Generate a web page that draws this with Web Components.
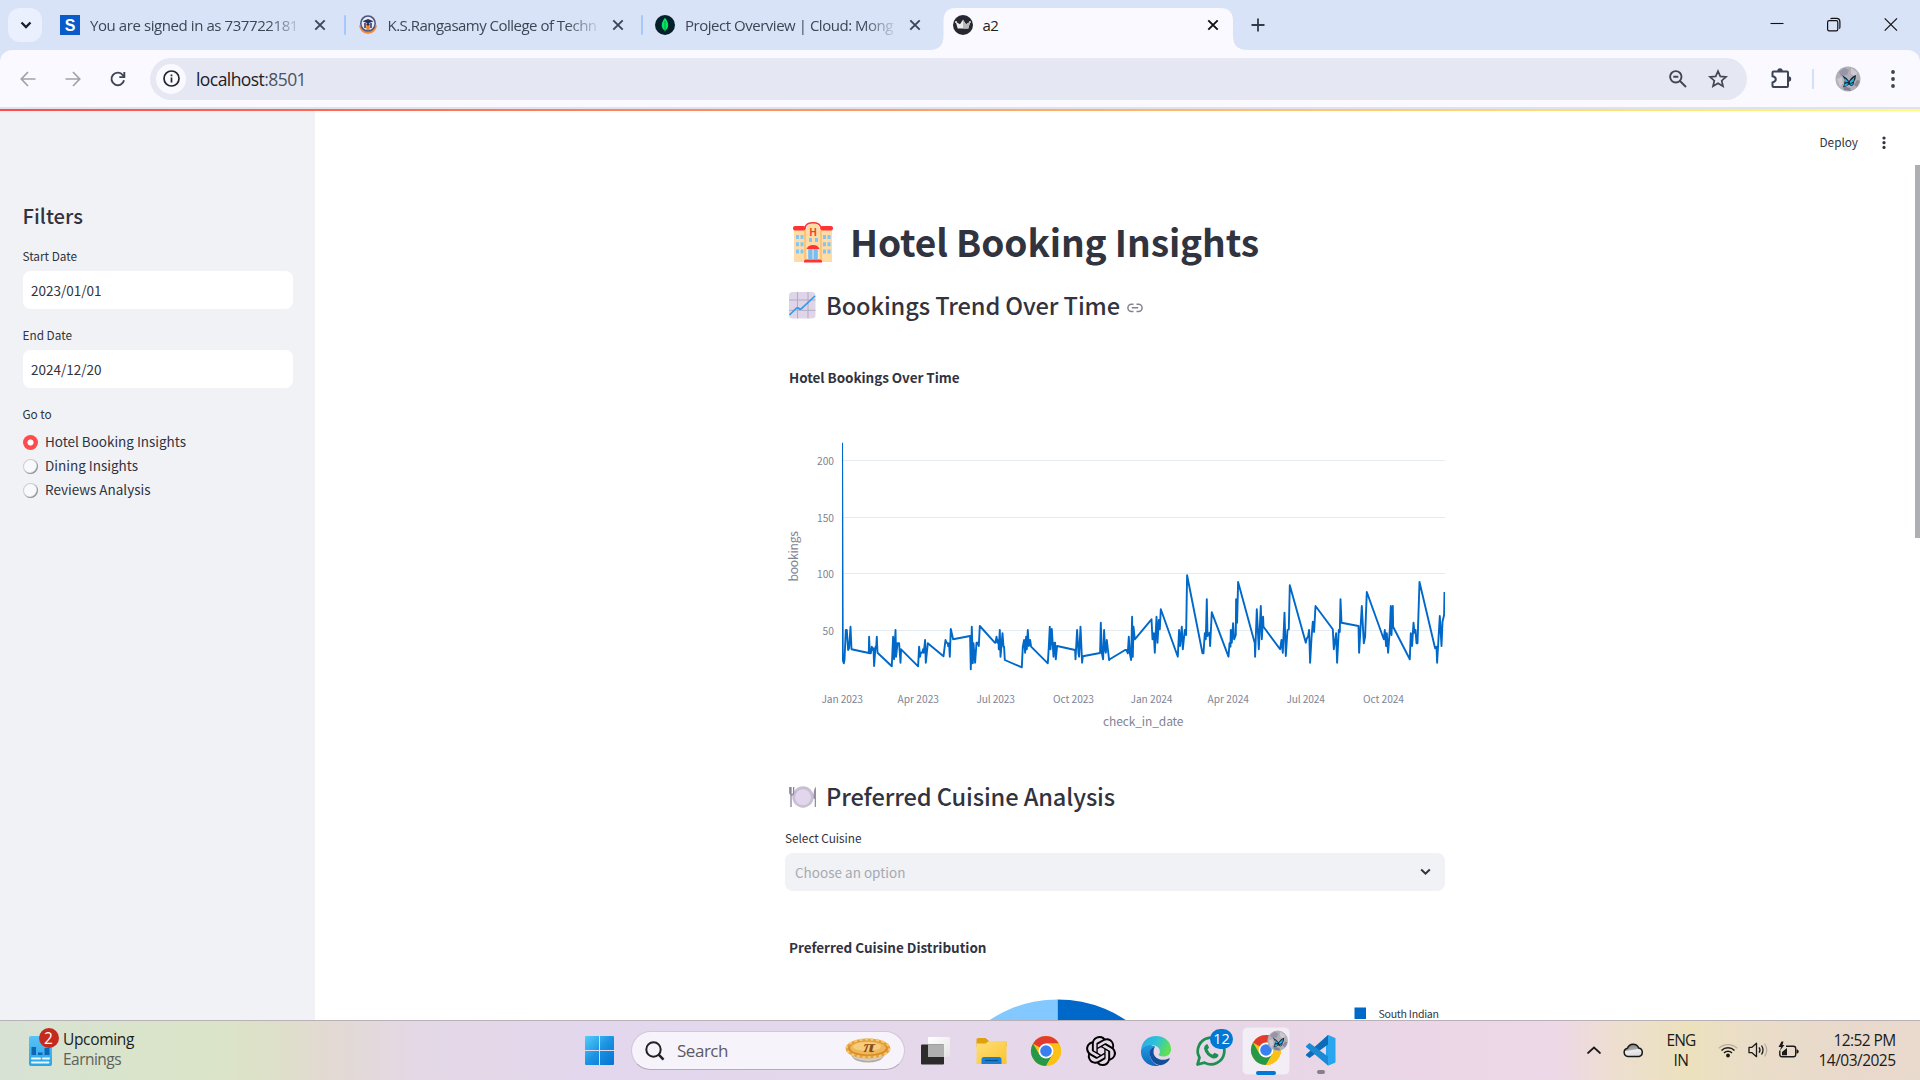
<!DOCTYPE html>
<html lang="en">
<head>
<meta charset="utf-8">
<title>a2</title>
<style>
html,body{margin:0;padding:0;width:1920px;height:1080px;overflow:hidden;background:#fff}
body{font-family:"Open Sans","Noto Sans",sans-serif}
</style>
</head>
<body>
<desktop-screen></desktop-screen>
<script>
const define=(name,css,render,after)=>customElements.define(name,class extends HTMLElement{
  connectedCallback(){
    if(this.shadowRoot)return;
    const root=this.attachShadow({mode:'open'});
    root.innerHTML=`<style>*{box-sizing:border-box}${css}</style>`+(typeof render==='function'?render(this):render);
    if(after)after(this);
  }
});
const at=(e,n,d='')=>e.getAttribute(n)??d;

const butterfly=(cx,cy,r)=>`<g><circle cx="${cx}" cy="${cy}" r="${r}" fill="#b3afb9"/>
<g transform="translate(${cx} ${cy}) scale(${r/12.5})"><path d="M-9-7 L-4-11 1-9-1-4-7-3Z" fill="#9796a6"/><path d="M3-11 9-7 8-2 3-5Z" fill="#cdc9cf"/><path d="M-11 0-6-2-5 4-8 8Z" fill="#cbc7ce"/><path d="M-5 7 2 9 3 12-4 11Z" fill="#83828f"/><path d="M9 1 12 2 9 8 6 6Z" fill="#8d8a96"/>
<path d="M-6-4 Q-2-2 1 2 Q4-3 8-4 Q8 0 6 3 Q6 7 3 7 L1 5.500 Q-2 8-5 8 Q-4 6-4 5 L-3 1 Z" fill="#182836"/><path d="M-3.500-1 .3 2.500-2.500 3.500Z M1.800 2.500 6.500-2 5.500 2.500 2 4.500Z M-3.500 5 .3 4-1 6.500-3.500 7.500Z M2 5.200 5.300 4 4 6.500Z" fill="#22b4ea"/></g></g>`;
const chrome=`<circle cx="15" cy="15" r="15" fill="#fbc116"/><path d="M15 15 2 7.5A15 15 0 0 1 28 7.5H15Z" fill="#e33b2e"/><path d="M2 7.5A15 15 0 0 0 15 30L21.5 18.7 8.5 18.7Z" fill="#279847"/><path d="M28 7.5H15V15L21.5 18.7 15 30A15 15 0 0 0 28 7.5Z" fill="#fbc116"/><circle cx="15" cy="15" r="7.4" fill="#fff"/><circle cx="15" cy="15" r="5.8" fill="#3a7ff0"/>`;
const S='fill="none" stroke="currentColor"';
const icons={
 down:[12,8,`<path d="M1.5 1.5 6 6 10.5 1.5" ${S} stroke-width="2.3"/>`],
 x:[12,12,`<path d="M1.300 1.300 10.700 10.700M10.700 1.300 1.300 10.700" ${S} stroke-width="1.900"/>`],
 plus:[14,14,`<path d="M7 0.5V13.5M.5 7H13.5" ${S} stroke-width="1.800"/>`],
 s:[20,20,`<rect width="20" height="20" fill="#0a5bc9"/><text x="10" y="16" text-anchor="middle" font-family="Liberation Sans,sans-serif" font-weight="700" font-size="16" fill="#fff">S</text>`],
 college:[20,20,`<path d="M1 9.500A9 9.500 0 0 0 19 9.500L15 14.500 10 16.500 5 14.500Z" fill="#f38b3c"/><ellipse cx="10" cy="8.500" rx="7.200" ry="7.600" fill="#e9e9f0" stroke="#4a5280" stroke-width="1.500"/><path d="M4.500 6.300 10 4 15.500 6.300 10 8.600Z" fill="#27305f"/><path d="M6 8H8V13H6Z M12 8H14V13H12Z" fill="#59618b"/><path d="M8.300 8.500H11.700V15H8.300Z" fill="#f07f28"/><circle cx="10" cy="9.300" r="1.400" fill="#27305f"/>`],
 mongo:[20,20,`<circle cx="10" cy="10" r="10" fill="#04202b"/><path d="M10 2.700C14.500 8 14 13 10.300 15.500L10 17.500 9.700 15.500C6 13 5.500 8 10 2.700Z" fill="#05e665"/><path d="M10 6V16" stroke="#04803d" stroke-width=".7"/>`],
 crown:[20,20,`<circle cx="10" cy="10" r="10" fill="#262730"/><path d="M2.700 6.800 7 9.300 10 4.700 13 9.300 17.300 6.800 15.300 13.500H4.700Z" fill="#ededed"/><path d="M10 4.700 13 9.300 17.300 6.800 15.300 13.500H10 Z" fill="#b8b8b8"/><circle cx="3" cy="7" r="1" fill="#eee"/><circle cx="17" cy="7" r="1" fill="#ccc"/>`],
 min:[14,14,`<path d="M.5 5.500H13.500" ${S} stroke-width="1.100"/>`],
 max:[14,14,`<rect x=".6" y="2.700" width="10.200" height="10.200" rx="1.600" ${S} stroke-width="1.200"/><path d="M3.500.9Q4 .4 5 .4H9.500Q12.900.4 12.900 4V9Q12.900 10 12.400 10.600" ${S} stroke-width="1.200"/>`],
 wx:[14,14,`<path d="M.7.4 13 12.700M13 .4.7 12.700" ${S} stroke-width="1.200"/>`],
 back:[16,16,`<path d="M8 1 1.300 8 8 15M1.500 8H15.500" ${S} stroke-width="1.700"/>`],
 fwd:[16,16,`<path d="M8 1 14.700 8 8 15M14.500 8H.5" ${S} stroke-width="1.700"/>`],
 reload:[16,16,`<path d="M14 9.200A6.300 6.300 0 1 1 12.900 4.200L14.300 5.800" ${S} stroke-width="1.900"/><path d="M9.300 6.100H14.300V1" ${S} stroke-width="1.900"/>`],
 info:[17,17,`<circle cx="8.500" cy="8.500" r="7.500" ${S} stroke-width="1.700"/><path d="M8.500 7.500V12.500M8.500 4.500V6.200" ${S} stroke-width="1.700"/>`],
 zoom:[18,18,`<circle cx="6.800" cy="6.800" r="5.700" ${S} stroke-width="1.900"/><path d="M11 11 17 17M4.300 6.800H9.300" ${S} stroke-width="1.900"/>`],
 star:[20,20,`<path d="M10 2.200 12.300 7.400 18 7.900 13.700 11.700 15 17.300 10 14.300 5 17.300 6.300 11.700 2 7.900 7.700 7.400Z" ${S} stroke-width="1.700"/>`],
 puzzle:[22,22,`<path d="M3.500 4.500H17Q18 4.500 18 5.500V19Q18 20 17 20H3.500Q2.500 20 2.500 19V15.500Q5.800 14.500 5.800 12.200Q5.800 10 2.500 9.200V5.500Q2.500 4.500 3.500 4.500Z" ${S} stroke-width="2"/><path d="M7.300 4A2.700 2.700 0 0 1 12.700 4Z M18.500 9.300A2.700 2.700 0 0 1 18.500 14.700Z" fill="currentColor"/>`],
 avatar:[26,26,butterfly(13,13,12.5)],
 dots:[4,18,`<circle cx="2" cy="2" r="1.900" fill="currentColor"/><circle cx="2" cy="9" r="1.900" fill="currentColor"/><circle cx="2" cy="16" r="1.900" fill="currentColor"/>`],
 dots2:[4,14,`<circle cx="2" cy="2" r="1.600" fill="currentColor"/><circle cx="2" cy="6.700" r="1.600" fill="currentColor"/><circle cx="2" cy="11.400" r="1.600" fill="currentColor"/>`],
 hotel:[42,42,`<path d="M2 8H40V41H2Z" fill="#ffdca5"/><path d="M13 41V13A8 11 0 0 1 29 13V41Z" fill="#ffdca5"/><path d="M13 9V40M29 9V40" stroke="#f6b568" stroke-width="1.200"/><rect x="1" y="5" width="12.500" height="4.500" rx="2" fill="#ff3434"/><rect x="28.500" y="5" width="12.500" height="4.500" rx="2" fill="#ff3434"/><path d="M13 8V6.500A8.200 6 0 0 1 29 6.500V8" fill="none" stroke="#ff3434" stroke-width="1.600"/><text x="21" y="14.500" text-anchor="middle" font-family="Liberation Sans,sans-serif" font-size="10" font-weight="700" fill="#f2412e">H</text>
 <path fill="#81c6f7" d="M4 14h3v4h-3zM8.500 14h3v4h-3zM4 21.300h3v4h-3zM8.500 21.300h3v4h-3zM4 28.600h3v4h-3zM8.500 28.600h3v4h-3zM31 14h3v4h-3zM35.500 14h3v4h-3zM31 21.300h3v4h-3zM35.500 21.300h3v4h-3zM31 28.600h3v4h-3zM35.500 28.600h3v4h-3zM17 17h3v4h-3zM23 17h3v4h-3z"/><path d="M16 28H26V38H16Z" fill="#76bdf3"/><path d="M15.700 28V38M26.300 28V38M21 28V38" stroke="#ffe8c2" stroke-width="1"/><path d="M14.500 28Q16 24 21 24T27.500 28Z" fill="#ff3434"/><path d="M12 41.500V40Q12.500 38.500 14 38.500H28Q29.500 38.500 30 40V41.500Z" fill="#f33"/>`],
 trend:[27,27,`<rect width="26.500" height="26.500" rx="3.500" fill="#dfd5e9"/><path d="M8.500 0V26.500M19 0V26.500M0 8H26.500M0 18.300H26.500" stroke="#b7a9c6" stroke-width="1"/><path d="M.5 23 7 16.500Q8.500 15.200 10 16.500T13 16.200L26 4" fill="none" stroke="#2f9cec" stroke-width="1.700"/>`],
 link:[16,10,`<path d="M6.500 1.200H4.500A3.600 3.600 0 0 0 4.500 8.400H6.500M9.500 1.200H11.500A3.600 3.600 0 0 1 11.500 8.400H9.500M4.800 4.800H11.200" ${S} stroke-width="1.500"/>`],
 plate:[28,24,`<circle cx="14" cy="12" r="10.700" fill="#c9bfd5"/><circle cx="14" cy="12.300" r="8" fill="#e1d6ec"/><path d="M2 2V22M.8 2V8Q2 10.500 3.200 9.500M4.600 2V8Q4 10.500 2 10" fill="none" stroke="#8d849c" stroke-width="1.300"/><path d="M27 1.500V22H25.700V14L24.500 13.500Q24 5 27 1.500Z" fill="#978da3"/>`],
 seldown:[11,8,`<path d="M1.200 1.500 5.500 5.700 9.800 1.500" ${S} stroke-width="2"/>`],
 widget:[34,34,`<defs><linearGradient id="a" x1="0" y1="0" x2="0" y2="1"><stop stop-color="#5bc2f5"/><stop offset="1" stop-color="#27a6e8"/></linearGradient></defs><rect x="2" y="6" width="23" height="30" rx="2" fill="url(#a)"/><path d="M4.500 17H9V25H4.500ZM11 22.500H15.500V25H11ZM17.500 18H22.500V25H17.500Z" fill="#0f66b4"/><path d="M5 28.500H13M16 28.500H22M5 32.500H21.500" stroke="#e8f7ff" stroke-width="2" stroke-linecap="round"/>`],
 start:[29,29,`<defs><linearGradient id="a" gradientUnits="userSpaceOnUse" x1="0" y1="0" x2="29" y2="29"><stop stop-color="#55cdfb"/><stop offset=".5" stop-color="#1b93e2"/><stop offset="1" stop-color="#0672cf"/></linearGradient></defs><path fill="url(#a)" d="M1 0H14V14H0V1Q0 0 1 0ZM15 0H28Q29 0 29 1V14H15ZM0 15H14V29H1Q0 29 0 28ZM15 15H29V28Q29 29 28 29H15Z"/>`],
 search:[20,20,`<circle cx="8.500" cy="8.500" r="7.200" ${S} stroke-width="2"/><path d="M13.700 13.700 18.500 18.700" ${S} stroke-width="2.500"/>`],
 pie:[46,25,`<path d="M5 13Q7 22 13 23Q23 26 33 23Q39 21 41 13Z" fill="#b2aaa0"/><path d="M7 16Q22 23 39 16L37 20Q23 26 9 20Z" fill="#d5cec4"/><ellipse cx="23" cy="10.500" rx="21" ry="8.600" fill="#d88a22" stroke="#e3a03c" stroke-width="2.600"/><ellipse cx="23" cy="10.300" rx="21.500" ry="9" fill="none" stroke="#f6c871" stroke-width="2.200" stroke-dasharray="3 2.500"/><ellipse cx="23" cy="9.800" rx="18" ry="6.600" fill="#efb65b"/><ellipse cx="22" cy="8.500" rx="14" ry="4.500" fill="#f6cc7d"/><text transform="translate(23 14) skewX(-14) scale(1.250 1)" text-anchor="middle" font-family="Liberation Serif,serif" font-size="17" font-weight="700" fill="#8b4a12">π</text>`],
 taskview:[31,29,`<defs><linearGradient id="a" x1="0" y1="0" x2="1" y2="1"><stop stop-color="#fff"/><stop offset="1" stop-color="#e4e4e4"/></linearGradient></defs><rect x="8" y="1" width="22" height="20" rx="1" fill="url(#a)"/><rect x="1" y="8.500" width="23" height="20" rx="1" fill="#2b2b2b"/><path d="M8 8.500H24V21H8Z" fill="#b1b0b0"/>`],
 folder:[31,28,`<defs><linearGradient id="a" x1="0" y1="0" x2="1" y2="1"><stop stop-color="#ffe07c"/><stop offset="1" stop-color="#f9c32d"/></linearGradient></defs><path d="M.5 7V2.500Q.5 1 2 1H9.500L13 4H29Q30.500 4 30.500 5.500V10H.5Z" fill="#dfa10c"/><path d="M.5 6.500H9.500L13 4H29Q30.500 4 30.500 5.500V27H.5Z" fill="url(#a)"/><path d="M5.500 27V22.500Q5.500 20 8 20H23Q25.500 20 25.500 22.500V27Z" fill="#1a7fd0"/><path d="M9 23.500H22" stroke="#0b4f8c" stroke-width="1.200"/>`],
 chrome:[30,30,chrome],
 gpt:[30,30,`<g transform="scale(1.25)"><path fill="#000" d="M22.2819 9.8211a5.9847 5.9847 0 0 0-.5157-4.9108 6.0462 6.0462 0 0 0-6.5098-2.9A6.0651 6.0651 0 0 0 4.9807 4.1818a5.9847 5.9847 0 0 0-3.9977 2.9 6.0462 6.0462 0 0 0 .7427 7.0966 5.98 5.98 0 0 0 .511 4.9107 6.051 6.051 0 0 0 6.5146 2.9001A5.9847 5.9847 0 0 0 13.2599 24a6.0557 6.0557 0 0 0 5.7718-4.2058 5.9894 5.9894 0 0 0 3.9977-2.9001 6.0557 6.0557 0 0 0-.7475-7.0729zm-9.022 12.6081a4.4755 4.4755 0 0 1-2.8764-1.0408l.1419-.0804 4.7783-2.7582a.7948.7948 0 0 0 .3927-.6813v-6.7369l2.02 1.1686a.071.071 0 0 1 .038.052v5.5826a4.504 4.504 0 0 1-4.4945 4.4944zm-9.6607-4.1254a4.4708 4.4708 0 0 1-.5346-3.0137l.142.0852 4.783 2.7582a.7712.7712 0 0 0 .7806 0l5.8428-3.3685v2.3324a.0804.0804 0 0 1-.0332.0615L9.74 19.9502a4.4992 4.4992 0 0 1-6.1408-1.6464zM2.3408 7.8956a4.485 4.485 0 0 1 2.3655-1.9728V11.6a.7664.7664 0 0 0 .3879.6765l5.8144 3.3543-2.0201 1.1685a.0757.0757 0 0 1-.071 0l-4.8303-2.7865A4.504 4.504 0 0 1 2.3408 7.872zm16.5963 3.8558L13.1038 8.364 15.1192 7.2a.0757.0757 0 0 1 .071 0l4.8303 2.7913a4.4944 4.4944 0 0 1-.6765 8.1042v-5.6772a.79.79 0 0 0-.407-.667zm2.0107-3.0231l-.142-.0852-4.7735-2.7818a.7759.7759 0 0 0-.7854 0L9.409 9.2297V6.8974a.0662.0662 0 0 1 .0284-.0615l4.8303-2.7866a4.4992 4.4992 0 0 1 6.6802 4.66zM8.3065 12.863l-2.02-1.1638a.0804.0804 0 0 1-.038-.0567V6.0742a4.4992 4.4992 0 0 1 7.3757-3.4537l-.142.0805L8.704 5.459a.7948.7948 0 0 0-.3927.6813zm1.0976-2.3654l2.602-1.4998 2.6069 1.4998v2.9994l-2.5974 1.4997-2.6067-1.4997Z"/></g>`],
 edge:[30,30,`<defs><linearGradient id="a" x1="0" y1="0" x2="1" y2=".35"><stop stop-color="#27a9e6"/><stop offset=".55" stop-color="#2fc2d8"/><stop offset="1" stop-color="#5fe052"/></linearGradient><linearGradient id="b" x1="0" y1="0" x2="0" y2="1"><stop stop-color="#1f9be0"/><stop offset="1" stop-color="#1366c0"/></linearGradient></defs><path d="M0 14C1 5 7 0 15 0C24 0 30 6 30 13C30 18 26.500 20.500 22.500 20.500C19.500 20.500 17.500 19.500 17.800 18.500C20 16 19 11 13.500 9.500C8 8 2 10 0 14Z" fill="url(#a)"/><path d="M0 14C3 8 10 8 14 10.500C10 12 8.500 15 9 19C9.500 24 13 28.500 18.500 29.500C9 32 -1 25 0 14Z" fill="url(#b)"/><path d="M14 10.500C9.500 12 8 15.500 9 19.500C10.500 26 15.500 29 19.500 29.300C24 28.500 27 26 28.700 23C29 22.300 28.500 22 28 22.300C21 26 12.500 22.500 12.500 16Q12.500 12.500 14 10.500Z" fill="#124e99"/>`],
 whatsapp:[30,30,`<path d="M1.500 28.500 3.500 21.600A13.300 13.300 0 1 1 8.500 26.600Z" fill="none" stroke="#1d8f52" stroke-width="2.700" stroke-linejoin="round"/><path d="M10.500 8.300Q8 9.500 8 12.500Q9.500 19.500 17 22.500Q20.500 23 22.300 20.300V18.500L18.500 16.800 16.500 18.700Q12.800 17 11.500 13.500L13 11.700 11.800 8.500Z" fill="#1d8f52"/>`],
 vscode:[30,31,`<path d="M22 0 29 3.300V27.500L22 30.500 20 28V3Z" fill="#28a2ee"/><path d="M22 0V9.500L3.500 23 0 20.500V19.500Z" fill="#0c6cb8"/><path d="M0 11 3.500 8 22 21.500V30.500L0 12Z" fill="#1b89d4"/><path d="M22 0V30.500L29.500 27.500V3.300Z" fill="#2aa5f0"/>`],
 up:[14,8,`<path d="M1 7 7 1.500 13 7" ${S} stroke-width="1.700" stroke-linecap="round"/>`],
 cloud:[21,15,`<defs><linearGradient id="a" x1="0" y1="0" x2=".25" y2="1"><stop stop-color="#777"/><stop offset=".5" stop-color="#aaa"/><stop offset=".58" stop-color="#eee"/><stop offset="1" stop-color="#ddd"/></linearGradient></defs><path d="M5 13.500A4.200 4.200 0 0 1 4.500 5.200A6 6 0 0 1 15.600 4.900A4.400 4.400 0 0 1 16 13.500Z" fill="url(#a)" stroke="#191919" stroke-width="1.500"/>`],
 wifi:[20,16,`<path d="M.8 6.300A13.200 13.200 0 0 1 19.200 6.300" ${S} stroke-width="1.200" opacity=".25"/><path d="M3.500 8.500A9.300 9.300 0 0 1 16.500 8.500M6 11A5.700 5.700 0 0 1 14 11" ${S} stroke-width="1.500"/><circle cx="10" cy="13.500" r="1.900" fill="currentColor"/>`],
 sound:[21,16,`<path d="M1 5.300H4L8.500 1.300V14.700L4 10.700H1Z" ${S} stroke-width="1.300" stroke-linejoin="round"/><path d="M11 5.300Q13 8 11 10.700M13.500 3.500Q16.500 8 13.500 12.500" ${S} stroke-width="1.300"/><path d="M16.500 1.500Q21 8 16.500 14.500" ${S} stroke-width="1.200" opacity=".25"/>`],
 battery:[21,17,`<path d="M8 4.200H15.500Q17.700 4.200 17.700 6.500V12.500Q17.700 14.800 15.500 14.800H4Q1.800 14.800 1.800 12.500V8.500" ${S} stroke-width="1.400"/><path d="M18.500 7.500H19.500Q20.700 8 20.700 9.500T19.500 11.500H18.500Z" fill="currentColor"/><path d="M3.500-.5.5 5H3L2 8.500 6.500 3H4.500L5.500-.5Z M4 13.300V10L9 6V13.300Z" fill="currentColor"/>`]
};
define('ui-icon',':host{display:block;flex:none;line-height:0}svg{display:block;overflow:visible}',e=>{const [w,h,c]=icons[at(e,'name')];return `<svg width="${w}" height="${h}" viewBox="0 0 ${w} ${h}">${c}</svg>`});

/* One line of text whose tracking is tuned to a given advance width. */
define('fit-text',':host{display:block;flex:none;white-space:nowrap}span{display:inline-block}','<span><slot></slot></span>',e=>{
  const w=+at(e,'w',0);if(!w)return;
  const s=e.shadowRoot.querySelector('span'),n=e.textContent.length;
  s.style.letterSpacing=(w-s.getBoundingClientRect().width)/n+'px';
  e.style.width=w+'px';
});

define('browser-tab',`
:host{display:flex;position:relative;align-items:center;width:297.500px;height:50px;padding:0 0 1px 12px;color:#3d4656;font-size:15px;flex:none}
svg.bg{position:absolute;left:-12px;top:8px}
ui-icon,fit-text{position:relative}
.title{width:210px;margin-left:10px;margin-right:14px;line-height:22px;padding-top:1px;-webkit-mask:linear-gradient(90deg,#000 178px,transparent 214px)}
:host([active]) .title{-webkit-mask:none;color:#1c1e26}
:host([active]) .x{color:#111}
.sep{width:2px;height:20px;border-radius:1px;background:#a8c7fa;margin-left:17.500px}`,
e=>`${e.hasAttribute('active')?'<svg class="bg" width="320" height="42"><path d="M0 42Q14.500 42 14.500 28V13Q14.500 0 27 0H291Q304 0 304 13V28Q304 42 319 42Z" fill="#f9f9ff"/></svg>':''}<ui-icon name="${at(e,'icon')}"></ui-icon><div class="title"><fit-text w="${at(e,'w')}">${e.textContent}</fit-text></div><ui-icon class="x" name="x"></ui-icon>${e.hasAttribute('sep')?'<div class="sep"></div>':''}`);

define('browser-chrome',`
:host{display:block;height:109px;background:#d8e3f7;flex:none}
.tabs{display:flex;height:50px;align-items:flex-start}
.menu{width:34px;height:34px;border-radius:12px;background:#ebf0ff;margin:8px 6px 0 8px;display:flex;align-items:center;justify-content:center;color:#1c1f27}
.menu ui-icon{margin-left:2px}
.plus{margin:18px 0 0 13px;color:#333b4a}
.win{display:flex;margin-left:auto;gap:43px;padding:18px 22px 0 0;color:#111}
.bar{display:flex;align-items:center;height:59px;background:#f9f9ff;border-radius:12px 12px 0 0;border-bottom:2px solid #dfe2ec;padding-left:20px;color:#3c4453}
.omni{display:flex;align-items:center;width:1597px;height:42px;border-radius:21px;background:#e5e8f3;margin-left:24px;padding-left:6px;color:#42474f}
.info{width:30px;height:30px;border-radius:50%;background:#f9f9ff;display:flex;align-items:center;justify-content:center;color:#22252b;margin-right:10px}
.sep{width:2px;height:20px;background:#d3e0fa;margin:0 21px}
fit-text{font-size:17.500px;line-height:24px;color:#1e2026}fit-text i{font-style:normal;color:#4c535e}`,
`<div class="tabs"><div class="menu"><ui-icon name="down"></ui-icon></div>
<browser-tab icon="s" w="208" sep>You are signed in as 737722181</browser-tab><browser-tab icon="college" w="209" sep>K.S.Rangasamy College of Techn</browser-tab><browser-tab icon="mongo" w="208">Project Overview | Cloud: Mong</browser-tab><browser-tab icon="crown" w="16" active>a2</browser-tab>
<ui-icon class="plus" name="plus"></ui-icon>
<div class="win"><ui-icon name="min"></ui-icon><ui-icon name="max"></ui-icon><ui-icon name="wx"></ui-icon></div></div>
<div class="bar"><ui-icon name="back" style="color:#a1a3ab"></ui-icon><ui-icon name="fwd" style="color:#a1a3ab;margin-left:29px"></ui-icon><ui-icon name="reload" style="margin-left:29px"></ui-icon>
<div class="omni"><div class="info"><ui-icon name="info"></ui-icon></div><fit-text w="110">localhost<i>:8501</i></fit-text><ui-icon name="zoom" style="margin-left:auto"></ui-icon><ui-icon name="star" style="margin:0 19.500px 0 21px"></ui-icon></div>
<ui-icon name="puzzle" style="margin:-2px 0 0 23px"></ui-icon><div class="sep" style="margin-left:20px"></div><ui-icon name="avatar"></ui-icon><ui-icon name="dots" style="margin-left:29.500px"></ui-icon></div>`);

define('date-field',`
:host{display:block}
.l{font-size:11.800px;line-height:16px;margin-bottom:7px;margin-left:-.5px}
.b{width:270px;height:38px;background:#fff;border-radius:7.500px;padding:0 8px;display:flex;align-items:center;font-size:13.500px;line-height:24px}`,
e=>`<fit-text class="l" w="${at(e,'lw')}">${at(e,'label')}</fit-text><div class="b"><fit-text w="70.500">${e.textContent}</fit-text></div>`);

define('radio-option',`
:host{display:flex;height:24px;align-items:center;font-size:13.500px;line-height:20px}
i{width:15px;height:15px;border-radius:50%;background:#f9f9fb;box-shadow:inset -1px -1px 1px #8d9099,inset 0 0 0 1px #cdd0d6;margin-right:7px}
:host([on]) i{background:radial-gradient(circle,#fff 2.700px,#ff4b4b 3.400px);box-shadow:none}
fit-text{padding-bottom:3px}`,
e=>`<i></i><fit-text w="${at(e,'w')}">${e.textContent}</fit-text>`);

define('filter-sidebar',`
:host{display:block;width:315px;flex:none;background:#f0f2f6;padding:93px 0 0 23px}
.h{font-size:20.250px;font-weight:500;line-height:24px;margin-bottom:20px;margin-left:-.5px}
date-field{margin-bottom:18px}
.g{font-size:11.800px;line-height:16px;margin-bottom:8.500px;margin-left:-.5px}`,
`<fit-text class="h" w="60.500">Filters</fit-text>
<date-field label="Start Date" lw="54.500">2023/01/01</date-field>
<date-field label="End Date" lw="49.500">2024/12/20</date-field>
<fit-text class="g" w="29">Go to</fit-text>
<radio-option on w="141">Hotel Booking Insights</radio-option><radio-option w="93">Dining Insights</radio-option><radio-option w="105.500">Reviews Analysis</radio-option>`);

const partA="187,38 189,690 192,700 194,690 198,600 201,600 205,660 208,655 212,590 215,658 267,669 268,620 270,670 273,670 276,650 279,660 281,655 283,708 287,650 289,655 291,620 293,668 336,709 340,620 343,688 347,600 349,680 353,640 358,640 362,698 364,658 367,661 415,709 418,650 421,680 423,668 427,668 430,658 432,668 436,630 438,698 444,640 491,679 497,630 500,638 504,640 505,648 508,640 510,680 513,597 520,628 571,618 573,718 576,590 579,700 581,640 584,680 586,698 590,638 594,638 597,648 600,588 645,638 647,638 650,620 653,638 656,630 657,658 660,600 662,680 668,610 671,650 673,650 675,690 726,712 729,650 733,630 736,668 739,620 741,658 744,600 747,648 751,630 754,650 804,700 807,650 810,590 812,658 816,597 821,680 824,638 826,638 828,688 832,648 886,660 887,688 892,600 896,670 898,680 902,590 907,698 909,679 961,669 963,578 966,668 970,688 973,600 976,660 978,668 981,630 988,690";
const partB="0,688 46,660 50,660 54,670 57,620 60,670 64,690 67,560 69,680 71,590 75,628 125,568 128,628 132,610 135,668 140,560 143,638 147,570 150,598 153,538 204,680 208,600 211,648 216,590 219,658 225,600 229,615 232,436 278,670 281,670 285,610 288,628 291,508 293,618 299,608 301,648 306,547 356,680 359,640 362,650 363,600 366,638 370,580 373,628 378,615 379,508 382,578 385,456 435,640 436,680 441,538 447,658 453,528 456,628 460,560 461,590 511,658 515,630 519,668 524,548 528,678 533,600 537,598 540,466 588,638 591,625 595,620 598,600 601,698 605,625 609,575 613,606 617,528 669,598 672,658 679,610 682,698 687,600 690,606 692,508 695,578 746,588 748,668 756,528 762,640 766,620 771,486 822,628 825,600 829,648 831,610 835,668 840,600 843,528 845,615 849,528 850,590 900,688 903,610 907,648 911,578 914,608 917,600 920,640 923,640 929,456 976,655 980,650 982,698 990,558 995,648 998,575 1003,555 1004,486";
const pts=(s,dx)=>s.split(' ').map(p=>{const [x,y]=p.split(',').map(Number);return (dx+x/3-.2).toFixed(1)+','+(430+y/3).toFixed(1)}).join(' ');
define('bookings-chart',':host{display:block}svg{display:block}text{font-size:10.200px;fill:#808495}.t{font-size:12px}',()=>{
 const ys=[[200,460.500],[150,517.500],[100,573.500],[50,630.500]];
 const xs=[['Jan 2023',821.500,41.500],['Apr 2023',897.500,41.500],['Jul 2023',976.500,38.500],['Oct 2023',1053,41],['Jan 2024',1130.500,42],['Apr 2024',1207.500,41.500],['Jul 2024',1286.500,38.500],['Oct 2024',1363,41]];
 return `<svg width="660" height="360" viewBox="785 400 660 360"><clipPath id="plot"><rect x="842" y="430" width="603" height="260"/></clipPath>
 ${ys.map(([v,y])=>`<path d="M842 ${y}H1445" stroke="#e6eaf1"/><text x="${v<100?822.5:817}" y="${y+4}" textLength="${v<100?11.5:17}">${v}</text>`).join('')}
 <polyline clip-path="url(#plot)" points="${pts(partA,780)} ${pts(partB,1110)}" fill="none" stroke="#0068c9" stroke-width="1.900" stroke-linejoin="round"/>
 ${xs.map(([t,x,w])=>`<text x="${x}" y="703.3" textLength="${w}">${t}</text>`).join('')}
 <text class="t" x="1103" y="726" textLength="80.500">check_in_date</text>
 <text class="t" transform="translate(798 581.500) rotate(-90)" textLength="50.500">bookings</text></svg>`});

define('cuisine-pie',':host{display:block}svg{display:block}text{font-size:10.600px;fill:#31333f}',
`<svg width="660" height="45" viewBox="785 975 660 45"><path d="M1057.700 999.500A123 123 0 0 0 934.700 1122.500H1057.700Z" fill="#83c9ff"/><path d="M1057.700 999.500A123 123 0 0 1 1180.700 1122.500H1057.700Z" fill="#0068c9"/><rect x="1354.500" y="1007.500" width="11.500" height="11.500" fill="#0068c9"/><text x="1378.500" y="1018" textLength="60.500">South Indian</text></svg>`);

define('main-panel',`
:host{display:flex;flex:1;background:#fff;overflow:hidden}
.col{width:660px;margin-left:470px;padding-top:105px;flex:none}
.h1{display:flex;align-items:center;height:50px;padding:2px 0 0 7px;font-size:37.100px;font-weight:700;line-height:50px;margin-bottom:23px}
.h2{display:flex;align-items:center;height:32px;padding-left:4px;font-size:23.600px;line-height:32px;font-weight:500}
.h2 ui-icon:last-child{color:#82848c;margin:6px 0 0 7px}
.ct{font-size:13.500px;font-weight:700;line-height:20px;margin-left:4px}
.lab{font-size:11.800px;line-height:16px;margin:18px 0 7px}
.sel{height:38px;border-radius:7.500px;background:#f0f2f6;display:flex;align-items:center;justify-content:space-between;padding:0 14px 0 10px;font-size:13.500px;line-height:24px;color:#a6a9b1}
.sel fit-text{margin-top:-1px}
.sel ui-icon{color:#31333f}
.side{margin-left:auto;width:120px;flex:none;display:flex;justify-content:flex-end;align-items:flex-start}
.dep{font-size:11.800px;line-height:16px;margin:23px 24px 0 0}
.side ui-icon{margin:24.500px 29px 0 0}
.bar{width:5px;height:373px;background:#adafb2;margin-top:54px}
`,
`<div class="col"><div class="h1"><ui-icon name="hotel"></ui-icon><fit-text w="409" style="margin:-2px 0 0 16px">Hotel Booking Insights</fit-text></div>
<div class="h2"><ui-icon name="trend" style="margin-top:1px"></ui-icon><fit-text w="294" style="margin-left:10px">Bookings Trend Over Time</fit-text><ui-icon name="link"></ui-icon></div>
<fit-text class="ct" w="170.500" style="margin-top:46px">Hotel Bookings Over Time</fit-text>
<bookings-chart style="margin-top:13px"></bookings-chart>
<div class="h2" style="margin-top:20px"><ui-icon name="plate" style="margin-top:2px"></ui-icon><fit-text w="289" style="margin-left:9px">Preferred Cuisine Analysis</fit-text></div>
<fit-text class="lab" w="76.500">Select Cuisine</fit-text>
<div class="sel"><fit-text w="110.500">Choose an option</fit-text><ui-icon name="seldown"></ui-icon></div>
<fit-text class="ct" w="197.500" style="margin-top:46px">Preferred Cuisine Distribution</fit-text>
<cuisine-pie style="margin-top:18px"></cuisine-pie></div>
<div class="side"><fit-text class="dep" w="38.500">Deploy</fit-text><ui-icon name="dots2"></ui-icon></div><div class="bar"></div>`);

define('count-badge',':host{position:absolute;display:flex;align-items:center;justify-content:center;height:20px;border-radius:10px;color:#fff;line-height:20px}','<slot></slot>');

define('task-bar',`
:host{display:flex;height:60px;flex:none;border-top:1px solid #b9b0b8;font-size:15.500px;line-height:20px;color:#1b1b1b;
background:linear-gradient(90deg,#d7e2d6 0,#d9e4cc 120px,#dbe4c8 220px,#dde0c8 270px,#e2dad2 325px,#e4d8e6 420px,#e2d7ed 600px,#e5d8ea 1000px,#e9d6e6 1350px,#edd8e6 1560px,#eddfce 1620px,#ece1bd 1690px,#ebdec7 1740px,#e8d9cc 1850px,#e8dacd 1920px);align-items:center}
.w{display:flex;position:relative;align-items:center;margin-left:27px;width:200px}
.w ui-icon{margin-top:-8px}
.w div{margin:-3px 0 0 2px}.w .s{color:#5c6259}
.p{display:flex;align-items:center;width:274px;height:39px;border-radius:20px;background:#f7f3fa;border:1px solid #d2c6d8;border-bottom-color:#b5a9bd;margin-left:17px;padding-left:13px;font-size:17px;color:#5c5a60}
.p ui-icon{color:#222}
.i{position:relative}
.act{position:relative;width:48px;height:48px;border-radius:5px;background:#f3edf6;border:1px solid #e9e1ec;display:flex;align-items:center;justify-content:center;margin-left:16px}
.u{position:absolute;height:4px;border-radius:2px}
.av{position:absolute;left:24px;top:2px;transform:scale(.82);transform-origin:0 0}
.tray{display:flex;align-items:center;margin-left:auto;padding-right:24.500px}
.c{display:flex;flex-direction:column;align-items:center;margin-top:-2px}`,
`<div class="w"><ui-icon name="widget"></ui-icon><count-badge style="width:20px;left:11.500px;top:-4px;background:#c42b1c">2</count-badge><div><fit-text w="71">Upcoming</fit-text><fit-text class="s" w="58">Earnings</fit-text></div></div>
<ui-icon name="start" style="margin-left:358px"></ui-icon>
<div class="p"><ui-icon name="search"></ui-icon><fit-text w="51" style="margin-left:12px">Search</fit-text><ui-icon name="pie" style="margin-left:117px"></ui-icon></div>
<ui-icon name="taskview" style="margin-left:15px"></ui-icon><ui-icon name="folder" style="margin-left:24.500px"></ui-icon><ui-icon name="chrome" style="margin-left:24.500px"></ui-icon><ui-icon name="gpt" style="margin-left:25px"></ui-icon><ui-icon name="edge" style="margin-left:25px"></ui-icon>
<div class="i" style="margin-left:25px"><ui-icon name="whatsapp"></ui-icon><count-badge style="width:23px;left:14px;top:-7px;background:#0078d4;font-size:14.500px">12</count-badge></div>
<div class="act"><ui-icon name="chrome" style="margin-top:-1px"></ui-icon><ui-icon name="avatar" class="av"></ui-icon><div class="u" style="width:20px;left:13px;bottom:-1px;background:#0078d4"></div></div>
<div class="i" style="margin-left:16px;top:-.5px"><ui-icon name="vscode"></ui-icon><div class="u" style="width:8px;left:11px;top:35px;background:#868088"></div></div>
<div class="tray"><ui-icon name="up" style="margin-top:-1px"></ui-icon><ui-icon name="cloud" style="margin:-1px 0 0 22px"></ui-icon><div class="c" style="margin-left:23px"><fit-text w="29">ENG</fit-text><fit-text w="15">IN</fit-text></div>
<ui-icon name="wifi" style="margin:-2px 0 0 22.500px"></ui-icon><ui-icon name="sound" style="margin:-1px 0 0 9.500px"></ui-icon><ui-icon name="battery" style="margin:-1px 0 0 9px"></ui-icon>
<div class="c" style="align-items:flex-end;margin-left:20px"><fit-text w="62">12:52 PM</fit-text><fit-text w="77">14/03/2025</fit-text></div></div>`);

define('desktop-screen',`
:host{display:flex;flex-direction:column;width:1920px;height:1080px;overflow:hidden}
.line{height:2px;flex:none;background:linear-gradient(90deg,#ff4b4b,#fffd80)}
.app{display:flex;height:909px;flex:none;overflow:hidden;color:#31333f;font-family:"Noto Sans CJK SC","Noto Sans",sans-serif}`,
'<browser-chrome></browser-chrome><div class="line"></div><div class="app"><filter-sidebar></filter-sidebar><main-panel></main-panel></div><task-bar></task-bar>');
</script>
</body>
</html>
